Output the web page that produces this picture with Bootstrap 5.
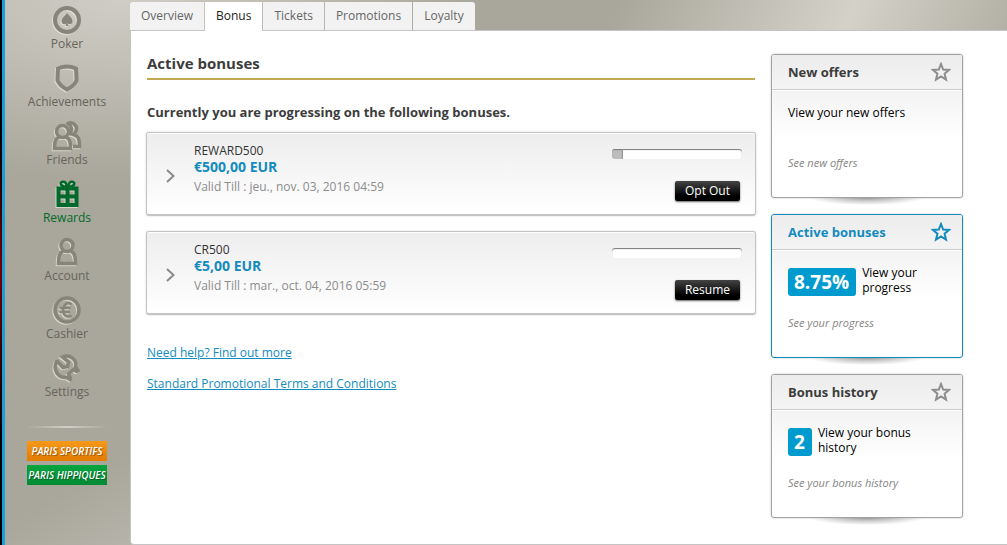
<!DOCTYPE html>
<html lang="en">
<head>
<meta charset="utf-8">
<meta name="viewport" content="width=device-width, initial-scale=1">
<title>Rewards – Active bonuses</title>
<link href="https://cdn.jsdelivr.net/npm/bootstrap@5.3.0/dist/css/bootstrap.min.css" rel="stylesheet">
<style>
  :root { --accent: #148bbd; --stone: #a9a79b; --glyph: #87857a; --frame: #c4c4c4; }
  body {
    font-family: "Trebuchet MS", "Open Sans", sans-serif; font-size: 12px; line-height: 16px; color: #000;
    background:
      linear-gradient(115deg, transparent 22%, #d4d1c9 68%, #b3b0a5) 100% 0 / 500px 31px no-repeat,
      linear-gradient(150deg, transparent 60%, rgba(205,203,197,.5)) 0 100% / 190px 200px no-repeat,
      radial-gradient(360px 180px at 120px 0, #d0cdc6, transparent),
      var(--stone);
  }
  a { color: var(--accent); }
  .edge { width: 5px; border-right: 3px solid #1a9fd9; background: linear-gradient(#000 130px, #700 270px, #000 440px); }
  .side { width: 125px; padding: 4px 1px 0 0; }
  .side-link { height: 58px; color: #66645b; font-weight: 500; text-decoration: none; }
  .side-link svg, .star { fill: none; stroke: currentColor; }
  .side-link svg { color: var(--glyph); filter: drop-shadow(-1px 1px 0 rgba(240,238,228,.65)); }
  .side-link.active, .side-link.active svg { color: #006a2c; }
  .rule { width: 82px; height: 2px; margin: 16px 0 13px; background: linear-gradient(90deg, transparent, #d0cec6, transparent); }
  .site { width: 80px; height: 20px; margin-bottom: 4px; font: italic 600 10px/20px "Open Sans", sans-serif; color: #fff; text-decoration: none; text-shadow: 1px 1px 1px rgba(0,0,0,.4); }
  .site-sport { background: linear-gradient(#f4991b, #e37c00); }
  .site-horse { background: linear-gradient(#04a53e, #048b34); }
  .tabs { padding-top: 2px; gap: 1px; margin-bottom: -1px; }
  .tabs .nav-link { height: 28px; padding: 0 11px; line-height: 28px; background: #f2f2f2; color: #666; border: 0; border-radius: 0; }
  .tabs .nav-link.active { height: 29px; color: #222; background: #fff; }
  .tabs li:first-child .nav-link { border-top-left-radius: 3px; }
  .tabs li:last-child .nav-link { border-top-right-radius: 3px; }
  .panel { background: #fff; border: solid var(--frame); border-width: 1px 0 1px 1px; border-bottom-left-radius: 4px; padding: 23px 44px 26px 16px; gap: 15px; }
  .title { font-size: 15px; line-height: 18px; font-weight: 700; color: #3c3c3c; padding-bottom: 6px; margin: 0 1px 22px 0; border-bottom: 2px solid #c0a855; }
  .subtitle { font-size: 13px; line-height: 20px; font-weight: 700; color: #3c3c3c; margin-bottom: 10px; }
  .bonus { height: 84px; margin: 0 0 15px -1px; padding: 10px 13px 0 18px; border: 1px solid var(--frame); border-bottom-width: 2px; border-radius: 3px; background: linear-gradient(#ededed, #fff); box-shadow: inset 0 1px #fff, 0 0 2px rgba(0,0,0,.2); }
  .toggle { width: 12px; margin: 25px 17px 0 0; padding: 0; border: 0; background: none; line-height: 0; }
  .code { color: #333; font-weight: 500; }
  .amount { font-size: 14px; line-height: 15px; font-weight: 700; color: var(--accent); margin-bottom: 5px; }
  .till { color: #8c8c8c; }
  .meter { width: 130px; height: 10px; margin: 6px 0 22px; border-radius: 3px; background: #fff; box-shadow: inset 0 1px 1px #777; }
  .meter .progress-bar { background: #bcbcbc; border-right: 1px solid #999; box-shadow: inset 0 1px 1px #777; }
  .act { height: 20px; margin-right: 2px; padding: 0 10px; border: 0; border-radius: 2px; color: #fff; font-size: 12px; line-height: 20px; font-weight: 500; background: linear-gradient(#444, #000 75%); box-shadow: 0 1px 2px rgba(0,0,0,.6); }
  .help { margin: 30px 0 0; gap: 15px; }
  .rail { width: 192px; gap: 16px; }
  .tile { height: 144px; border: 1px solid #a2a2a2; border-radius: 3px; background: linear-gradient(#f2f2f2 30px, #fff 85px); color: #3c3c3c; box-shadow: 0 0 2px rgba(0,0,0,.25); }
  .tile::after { content: ""; position: absolute; left: 20%; right: 20%; top: 100%; height: 7px; margin-top: 1px; background: radial-gradient(50% 100% at 50% 0, rgba(0,0,0,.35), transparent); }
  .tile.current { border-color: var(--accent); color: var(--accent); }
  .tile-head { height: 35px; padding: 0 11px 0 16px; border-bottom: 1px solid #ccc; box-shadow: 0 1px #fff; background: linear-gradient(#ececec, #f4f4f4); border-radius: 2px 2px 0 0; }
  .tile-head h2 { font-size: 13px; line-height: 20px; font-weight: 700; margin: 0; }
  .star { color: #8d8d8d; stroke-width: 2; }
  .current .star { color: var(--accent); }
  .tile-body { padding: 15px 16px; }
  .tile-text { height: 42px; gap: 6px; color: #000; line-height: 15px; }
  .value { height: 28px; margin-top: 3px; padding: 0 7px 0 6px; border-radius: 3px; background: #009bce; color: #fff; font-size: 19px; line-height: 28px; font-weight: 700; }
  .more { color: #858585; font-size: 11px; font-style: italic; text-decoration: none; margin-top: 8px; }
</style>
</head>
<body>
<div class="d-flex min-vh-100">
  <div class="edge flex-shrink-0"></div>
  <nav class="side flex-shrink-0 d-flex flex-column align-items-center" aria-label="Main">
    <a href="#" class="side-link d-flex flex-column align-items-center">
      <svg width="32" height="32" viewBox="0 0 32 32"><circle cx="16" cy="16" r="12" stroke-width="4"/><path d="M16 9C14 12 10.500 14 10.500 17.500C10.500 20 13.500 21 15.400 19.300L14.500 22H17.500L16.600 19.300C18.500 21 21.500 20 21.500 17.500C21.500 14 18 12 16 9Z" fill="currentColor" stroke="none"/></svg>Poker</a>
    <a href="#" class="side-link d-flex flex-column align-items-center">
      <svg width="32" height="32" viewBox="0 0 32 32"><path d="M7 6.500Q16 2.500 25 6.500Q25.500 13 25.500 18.500Q23 24 16 27.500Q9 24 6.500 18.500Q6.500 13 7 6.500Z" stroke-width="4"/></svg>Achievements</a>
    <a href="#" class="side-link d-flex flex-column align-items-center">
      <svg width="32" height="32" viewBox="0 0 32 32"><g stroke-width="3.500"><path d="M15.500 4.500C21 0 28 6 24.500 12L22.500 14.500C27 16 28.500 18 28.500 26.500H22M18.500 4.500C21 8 20.500 12 18 15"/><circle cx="11.500" cy="11.500" r="6"/><path d="M8 17C4.500 19 3.500 21 3.500 28.500H19.500C19.500 21 18.500 19 15 17"/></g></svg>Friends</a>
    <a href="#" class="side-link active d-flex flex-column align-items-center" aria-current="page">
      <svg width="32" height="32" viewBox="0 0 32 32"><g stroke-width="4"><path d="M7.500 10.500H25.500V27H7.500ZM16.500 10V27M7.500 18.500H25.500"/><path d="M16 9C10 9 8 5 11 4C14 3 15.500 5 16 9ZM17 9C23 9 25 5 22 4C19 3 17.500 5 17 9Z" stroke-width="2.500"/></g></svg>Rewards</a>
    <a href="#" class="side-link d-flex flex-column align-items-center">
      <svg width="32" height="32" viewBox="0 0 32 32"><g stroke-width="3.500"><circle cx="16" cy="9.500" r="6"/><path d="M12 15C8.500 17 7.500 20 7.500 27.500H24.500C24.500 20 23.500 17 20 15"/></g></svg>Account</a>
    <a href="#" class="side-link d-flex flex-column align-items-center">
      <svg width="32" height="32" viewBox="0 0 32 32"><circle cx="16" cy="16" r="12" stroke-width="3.500"/><path d="M20.500 10.500C16 7.500 12 11 12 16S16 24.500 20.500 21.500M8.500 14H19.500M8.500 18H19" stroke-width="2.500"/></svg>Cashier</a>
    <a href="#" class="side-link d-flex flex-column align-items-center">
      <svg width="32" height="32" viewBox="0 0 32 32"><path d="M5.500 8.500L12 15.500L16.500 14.500L17.500 10L11.500 5C19 2 26.500 7.500 24.500 15L28 20M26.500 20L22.500 17.500L17.500 22L20 27M20.500 28.500L16 25.500C7 26.500 1 17.500 6 8.500" stroke-width="3.500"/></svg>Settings</a>
    <div class="rule"></div>
    <a href="#" class="site site-sport text-center text-nowrap">PARIS SPORTIFS</a>
    <a href="#" class="site site-horse text-center text-nowrap">PARIS HIPPIQUES</a>
  </nav>
  <div class="flex-grow-1 d-flex flex-column">
    <ul class="nav tabs">
      <li class="nav-item"><a class="nav-link" href="#">Overview</a></li>
      <li class="nav-item"><a class="nav-link active position-relative" aria-current="page" href="#">Bonus</a></li>
      <li class="nav-item"><a class="nav-link" href="#">Tickets</a></li>
      <li class="nav-item"><a class="nav-link" href="#">Promotions</a></li>
      <li class="nav-item"><a class="nav-link" href="#">Loyalty</a></li>
    </ul>
    <div class="panel flex-grow-1 d-flex">
      <main class="flex-grow-1">
        <h1 class="title">Active bonuses</h1>
        <h2 class="subtitle">Currently you are progressing on the following bonuses.</h2>
        <article class="bonus d-flex align-items-start">
          <button type="button" class="toggle" aria-label="Show REWARD500 details"><svg width="12" height="16" viewBox="0 0 12 16" fill="none" stroke="#8a8a8a" stroke-width="2"><path d="M2 2L8.500 8L2 14"/></svg></button>
          <div class="flex-grow-1"><div class="code">REWARD500</div><div class="amount">€500,00 EUR</div><div class="till">Valid Till : jeu., nov. 03, 2016 04:59</div></div>
          <div class="d-flex flex-column align-items-end">
            <div class="progress meter" role="progressbar" aria-label="REWARD500 progress" aria-valuenow="8.75" aria-valuemin="0" aria-valuemax="100"><div class="progress-bar" style="width:8.75%"></div></div>
            <button type="button" class="act">Opt Out</button>
          </div>
        </article>
        <article class="bonus d-flex align-items-start">
          <button type="button" class="toggle" aria-label="Show CR500 details"><svg width="12" height="16" viewBox="0 0 12 16" fill="none" stroke="#8a8a8a" stroke-width="2"><path d="M2 2L8.500 8L2 14"/></svg></button>
          <div class="flex-grow-1"><div class="code">CR500</div><div class="amount">€5,00 EUR</div><div class="till">Valid Till : mar., oct. 04, 2016 05:59</div></div>
          <div class="d-flex flex-column align-items-end">
            <div class="progress meter" role="progressbar" aria-label="CR500 progress" aria-valuenow="0" aria-valuemin="0" aria-valuemax="100"></div>
            <button type="button" class="act">Resume</button>
          </div>
        </article>
        <div class="help d-flex flex-column align-items-start">
          <a href="#">Need help? Find out more</a>
          <a href="#">Standard Promotional Terms and Conditions</a>
        </div>
      </main>
      <aside class="rail flex-shrink-0 d-flex flex-column">
        <section class="tile card">
          <div class="tile-head d-flex align-items-center justify-content-between"><h2>New offers</h2><svg class="star" width="20" height="20" viewBox="0 0 20 20"><path d="M10 2L12.200 7.500L18 7.900L13.600 11.700L15 17.700L10 14.500L5 17.700L6.400 11.700L2 7.900L7.800 7.500Z"/></svg></div>
          <div class="tile-body d-flex flex-column align-items-start"><div class="tile-text d-flex align-items-start">View your new offers</div><a href="#" class="more">See new offers</a></div>
        </section>
        <section class="tile card current">
          <div class="tile-head d-flex align-items-center justify-content-between"><h2>Active bonuses</h2><svg class="star" width="20" height="20" viewBox="0 0 20 20"><path d="M10 2L12.200 7.500L18 7.900L13.600 11.700L15 17.700L10 14.500L5 17.700L6.400 11.700L2 7.900L7.800 7.500Z"/></svg></div>
          <div class="tile-body d-flex flex-column align-items-start"><div class="tile-text d-flex align-items-start"><span class="value">8.75%</span><span>View your progress</span></div><a href="#" class="more">See your progress</a></div>
        </section>
        <section class="tile card">
          <div class="tile-head d-flex align-items-center justify-content-between"><h2>Bonus history</h2><svg class="star" width="20" height="20" viewBox="0 0 20 20"><path d="M10 2L12.200 7.500L18 7.900L13.600 11.700L15 17.700L10 14.500L5 17.700L6.400 11.700L2 7.900L7.800 7.500Z"/></svg></div>
          <div class="tile-body d-flex flex-column align-items-start"><div class="tile-text d-flex align-items-start"><span class="value">2</span><span>View your bonus history</span></div><a href="#" class="more">See your bonus history</a></div>
        </section>
      </aside>
    </div>
  </div>
</div>
<script src="https://cdn.jsdelivr.net/npm/bootstrap@5.3.0/dist/js/bootstrap.bundle.min.js"></script>
</body>
</html>
